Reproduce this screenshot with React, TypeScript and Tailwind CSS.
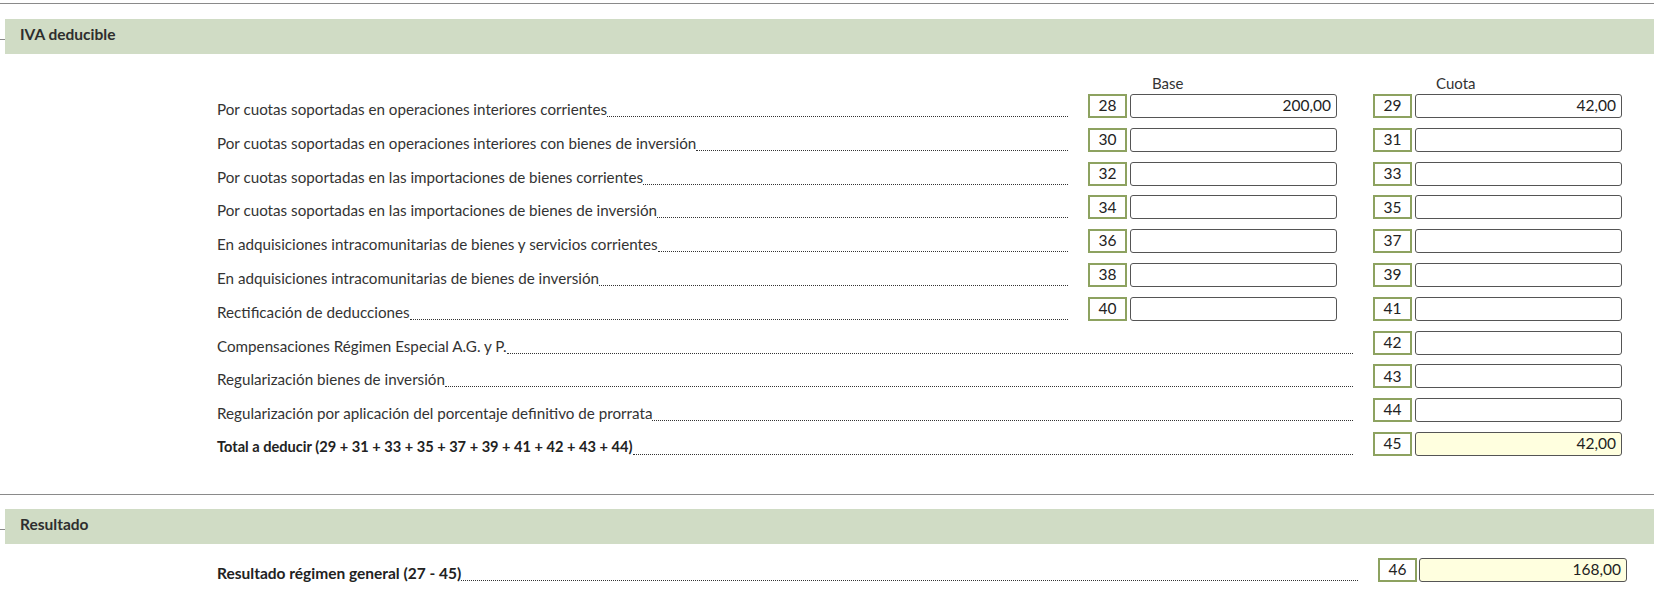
import React from "react";

type Row = {
  label: string;
  b?: string;
  bv?: string;
  c: string;
  cv?: string;
  bold?: boolean;
  yellow?: boolean;
};

const rows: Row[] = [
  { label: "Por cuotas soportadas en operaciones interiores corrientes", b: "28", bv: "200,00", c: "29", cv: "42,00" },
  { label: "Por cuotas soportadas en operaciones interiores con bienes de inversión", b: "30", c: "31" },
  { label: "Por cuotas soportadas en las importaciones de bienes corrientes", b: "32", c: "33" },
  { label: "Por cuotas soportadas en las importaciones de bienes de inversión", b: "34", c: "35" },
  { label: "En adquisiciones intracomunitarias de bienes y servicios corrientes", b: "36", c: "37" },
  { label: "En adquisiciones intracomunitarias de bienes de inversión", b: "38", c: "39" },
  { label: "Rectificación de deducciones", b: "40", c: "41" },
  { label: "Compensaciones Régimen Especial A.G. y P.", c: "42" },
  { label: "Regularización bienes de inversión", c: "43" },
  { label: "Regularización por aplicación del porcentaje definitivo de prorrata", c: "44" },
  { label: "Total a deducir (29 + 31 + 33 + 35 + 37 + 39 + 41 + 42 + 43 + 44)", c: "45", cv: "42,00", bold: true, yellow: true },
];

function NumBox({ n }: { n: string }) {
  return (
    <div className="w-[39px] h-[24px] border-2 border-[#8da260] bg-white flex items-center justify-center text-[15.5px] leading-none text-[#222]">
      {n}
    </div>
  );
}

function Field({ v, yellow, w = 207 }: { v?: string; yellow?: boolean; w?: number }) {
  return (
    <div
      className={`h-[24px] border border-[#555] rounded-[3px] flex items-center justify-end pr-[5px] text-[15.5px] leading-none text-[#222] ${
        yellow ? "bg-[#ffffdf]" : "bg-white"
      } ${w === 208 ? "w-[208px]" : "w-[207px]"}`}
    >
      {v}
    </div>
  );
}

function Header({ title }: { title: string }) {
  return (
    <div className="flex h-[35px]">
      <div className="w-[5px] relative">
        <div className="absolute left-0 right-0 top-[20px] h-px bg-[#8a8a8a]" />
      </div>
      <div className="flex-1 bg-[#d0dcc5] flex items-center pb-[3px] pl-[15px] font-bold text-[15.5px] text-[#2e2e2e]">
        {title}
      </div>
    </div>
  );
}

export default function App() {
  return (
    <div
      className="w-[1654px] h-[615px] bg-white overflow-hidden text-[#333]"
      style={{ fontFamily: "Lato, 'Noto Sans', sans-serif" }}
    >
      <div className="pt-[3px]">
        <div className="h-px bg-[#8a8a8a]" />
      </div>
      <div className="mt-[15px]">
        <Header title="IVA deducible" />
      </div>

      <div className="mt-[19px] h-[21px] flex pl-[1088px] text-[15px] leading-[21px] text-[#333]">
        <div className="w-[249px] pl-[64px]">Base</div>
        <div className="w-[36px]" />
        <div className="w-[249px] pl-[63px]">Cuota</div>
      </div>

      <div>
        {rows.map((r) => (
          <div key={r.c} className="h-[33.8px] flex items-start pl-[217px] pr-[32px]">
            <div className="flex-1 flex items-end h-[24px]">
              <span
                className={`leading-[18px] whitespace-nowrap ${
                  r.bold ? "font-bold text-[14.6px] text-[#222]" : "text-[15.2px] text-[#333]"
                }`}
              >
                {r.label}
              </span>
              <span className="flex-1 border-b border-dotted border-[#333] mb-[1px]" />
            </div>
            {r.b ? (
              <div className="flex ml-[20px]">
                <NumBox n={r.b} />
                <div className="ml-[3px]">
                  <Field v={r.bv} />
                </div>
              </div>
            ) : null}
            <div className={`flex ${r.b ? "ml-[36px]" : "ml-[20px]"}`}>
              <NumBox n={r.c} />
              <div className="ml-[3px]">
                <Field v={r.cv} yellow={r.yellow} />
              </div>
            </div>
          </div>
        ))}
      </div>

      <div className="mt-[28px] h-px bg-[#8a8a8a]" />
      <div className="mt-[14px]">
        <Header title="Resultado" />
      </div>

      <div className="mt-[14px] h-[24px] flex items-start pl-[217px] pr-[27px]">
        <div className="flex-1 flex items-end h-[24px]">
          <span className="text-[15.5px] leading-[18px] whitespace-nowrap font-bold text-[#222]">
            Resultado régimen general (27 - 45)
          </span>
          <span className="flex-1 border-b border-dotted border-[#333] mb-[1px]" />
        </div>
        <div className="flex ml-[20px]">
          <NumBox n="46" />
          <div className="ml-[2px]">
            <Field v="168,00" yellow w={208} />
          </div>
        </div>
      </div>
    </div>
  );
}
